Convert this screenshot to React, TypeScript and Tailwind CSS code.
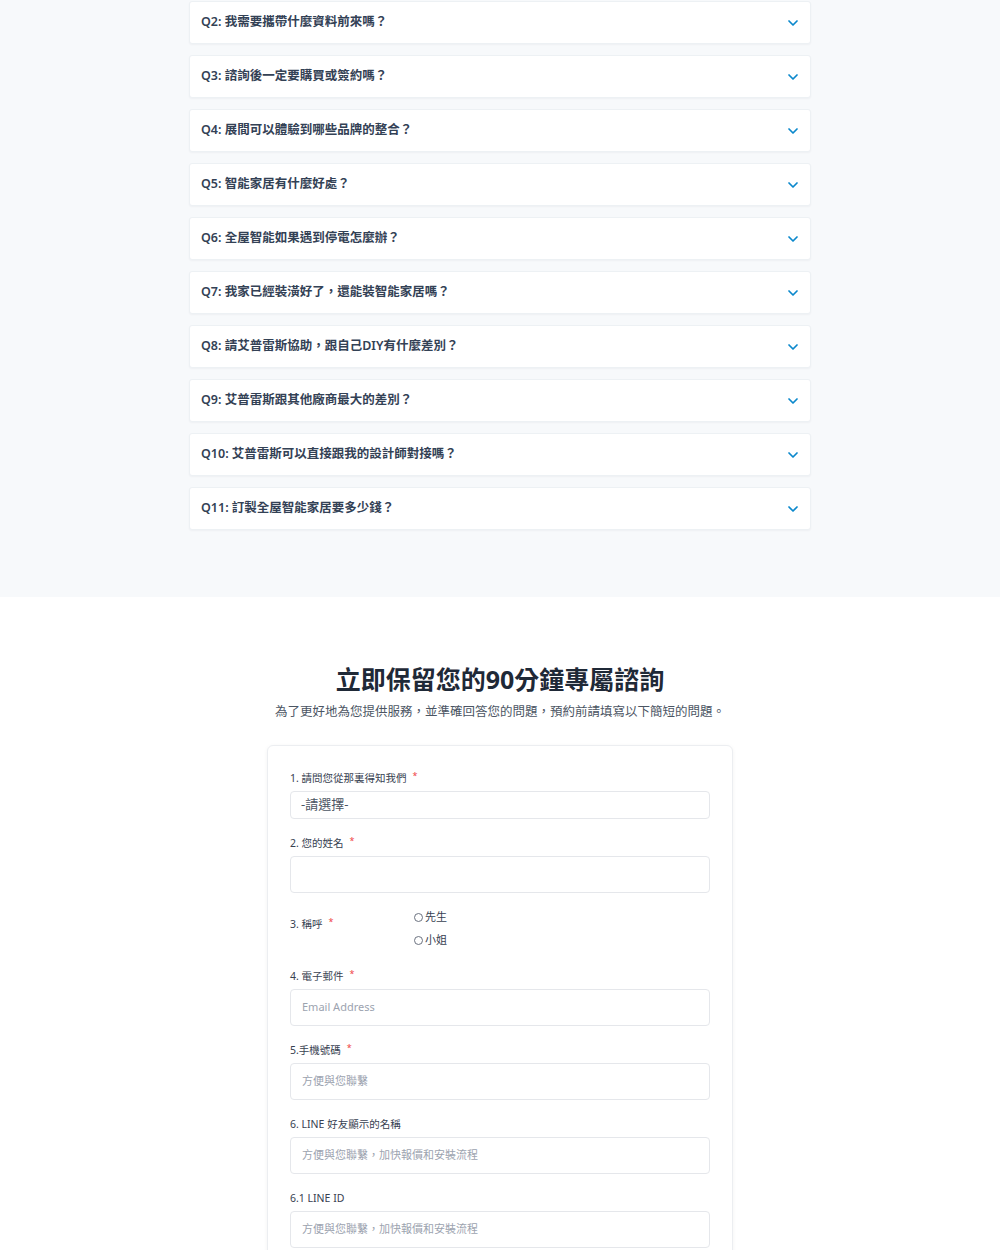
import React from 'react';
import { ChevronDown } from 'lucide-react';

const faqs = [
  'Q2: 我需要攜帶什麼資料前來嗎？',
  'Q3: 諮詢後一定要購買或簽約嗎？',
  'Q4: 展間可以體驗到哪些品牌的整合？',
  'Q5: 智能家居有什麼好處？',
  'Q6: 全屋智能如果遇到停電怎麼辦？',
  'Q7: 我家已經裝潢好了，還能裝智能家居嗎？',
  'Q8: 請艾普雷斯協助，跟自己DIY有什麼差別？',
  'Q9: 艾普雷斯跟其他廠商最大的差別？',
  'Q10: 艾普雷斯可以直接跟我的設計師對接嗎？',
  'Q11: 訂製全屋智能家居要多少錢？',
];

const Label: React.FC<{ text: string; required?: boolean }> = ({ text, required }) => (
  <div className="text-[10.5px] leading-[14px] text-[#374151] mb-[6px] flex items-start">
    <span>{text}</span>
    {required && <span className="text-[#ef4444] text-[9px] leading-[10px] ml-[6px]">*</span>}
  </div>
);

const TextField: React.FC<{ placeholder?: string }> = ({ placeholder }) => (
  <div className="h-[37px] border border-[#e5e7eb] rounded-[4px] bg-white flex items-center px-[11px] text-[11px] text-[#9ca3af]">
    {placeholder}
  </div>
);

const App: React.FC = () => {
  return (
    <div className="w-[1000px] bg-white" style={{ fontFamily: '"Noto Sans", "Noto Sans CJK TC", sans-serif' }}>
      {/* FAQ list */}
      <section className="bg-[#f7f9fb] pt-[1px] pb-[67px]">
        <div className="w-[622px] mx-auto flex flex-col gap-[11px]">
          {faqs.map((q) => (
            <div
              key={q}
              className="h-[43px] bg-white border border-[#edf1f4] rounded-[3px] shadow-[0_1px_2px_rgba(15,23,42,0.04)] flex items-center justify-between pl-[11px] pr-[9px]"
            >
              <span className="text-[12.5px] font-semibold text-[#334155]">{q}</span>
              <ChevronDown className="w-[16px] h-[16px] text-[#0b88cc]" strokeWidth={2.6} />
            </div>
          ))}
        </div>
      </section>

      {/* Booking form */}
      <section className="bg-white pt-[65px] pb-[40px]">
        <h2 className="text-center text-[25px] leading-[34px] font-bold text-[#1f2937]">
          立即保留您的90分鐘專屬諮詢
        </h2>
        <p className="text-center text-[12.5px] leading-[18px] text-[#4b5563] mt-[7px]">
          為了更好地為您提供服務，並準確回答您的問題，預約前請填寫以下簡短的問題。
        </p>

        <div className="w-[466px] mx-auto mt-[24px] border border-[#eceef1] rounded-[6px] shadow-[0_1px_4px_rgba(15,23,42,0.05)] px-[22px] pt-[25px] pb-[30px]">
          <Label text="1. 請問您從那裏得知我們" required />
          <div className="h-[28px] border border-[#e5e7eb] rounded-[4px] flex items-center px-[10px] text-[13px] text-[#4b5563]">
            -請選擇-
          </div>

          <div className="mt-[17px]">
            <Label text="2. 您的姓名" required />
            <TextField />
          </div>

          <div className="mt-[16px] flex items-start">
            <div className="w-[124px] pt-[8px]">
              <div className="text-[10.5px] leading-[14px] text-[#374151] flex items-start">
                <span>3. 稱呼</span>
                <span className="text-[#ef4444] text-[9px] leading-[10px] ml-[6px]">*</span>
              </div>
            </div>
            <div className="flex flex-col gap-[7px]">
              {['先生', '小姐'].map((o) => (
                <label key={o} className="flex items-center gap-[2px] h-[16px] text-[11px] text-[#374151]">
                  <span className="w-[9px] h-[9px] rounded-full border border-[#6b7280] bg-white" />
                  <span>{o}</span>
                </label>
              ))}
            </div>
          </div>

          <div className="mt-[21px]">
            <Label text="4. 電子郵件" required />
            <TextField placeholder="Email Address" />
          </div>

          <div className="mt-[17px]">
            <Label text="5.手機號碼" required />
            <TextField placeholder="方便與您聯繫" />
          </div>

          <div className="mt-[17px]">
            <Label text="6. LINE 好友顯示的名稱" />
            <TextField placeholder="方便與您聯繫，加快報價和安裝流程" />
          </div>

          <div className="mt-[17px]">
            <Label text="6.1 LINE ID" />
            <TextField placeholder="方便與您聯繫，加快報價和安裝流程" />
          </div>
        </div>
      </section>
    </div>
  );
};

export default App;
